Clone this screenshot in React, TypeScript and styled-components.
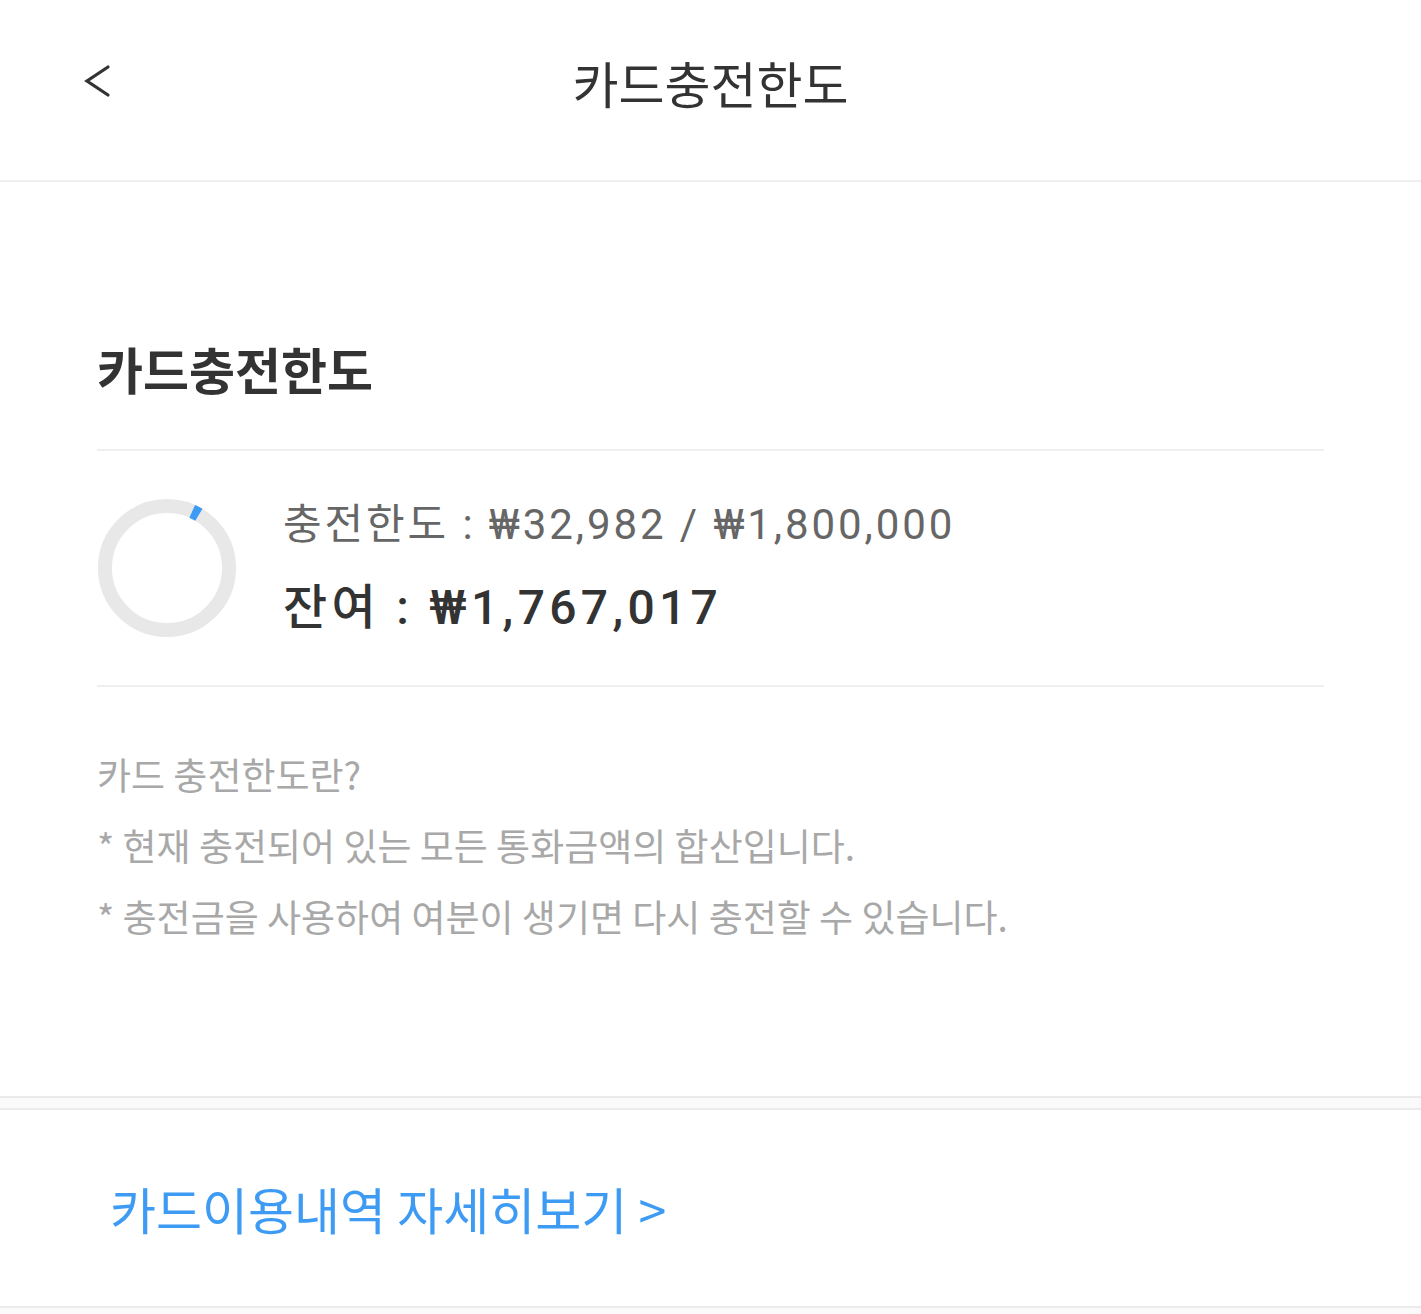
import * as React from 'react';
import styled, { createGlobalStyle } from 'styled-components';

const dark = '#333333';
const mid = '#666666';
const light = '#a8a8a8';
const line = '#efefef';
const blue = '#3d9bf3';

const GlobalStyle = createGlobalStyle`
  html, body {
    margin: 0;
    padding: 0;
    background: #ffffff;
  }
  body {
    font-family: "Noto Sans CJK KR", "Noto Sans", sans-serif;
    color: ${dark};
  }
`;

const Page = styled.div`
  width: 1421px;
  min-height: 1314px;
  background: #fafafa;
`;

const Header = styled.header`
  display: grid;
  grid-template-columns: 1fr auto 1fr;
  align-items: center;
  box-sizing: border-box;
  height: 182px;
  padding-bottom: 16px;
  background: #ffffff;
  border-bottom: 2px solid ${line};
`;

const BackButton = styled.button`
  justify-self: start;
  display: flex;
  align-items: center;
  margin: 0 0 0 78px;
  padding: 4px;
  border: none;
  background: none;
  color: ${dark};
  cursor: pointer;
`;

const HeaderTitle = styled.h1`
  margin: 0;
  font-size: 50px;
  font-weight: 400;
  line-height: 1;
  color: ${dark};
`;

const Content = styled.main`
  background: #ffffff;
  padding: 158px 97px 144px;
`;

const SectionTitle = styled.h2`
  margin: 0 0 53px;
  font-size: 50px;
  font-weight: 700;
  line-height: 56px;
  color: ${dark};
`;

const Summary = styled.section`
  display: flex;
  align-items: center;
  gap: 46px;
  height: 234px;
  border-top: 2px solid ${line};
  border-bottom: 2px solid ${line};
`;

const Amounts = styled.div`
  display: flex;
  flex-direction: column;
  gap: 29px;
`;

const AmountLine = styled.div<{ $strong?: boolean }>`
  font-family: Roboto, "Noto Sans CJK KR", sans-serif;
  font-size: ${p => (p.$strong ? '48px' : '42px')};
  font-weight: ${p => (p.$strong ? 500 : 400)};
  line-height: 1.2;
  letter-spacing: ${p => (p.$strong ? '4.3px' : '2.9px')};
  color: ${p => (p.$strong ? dark : mid)};
  white-space: nowrap;
`;

const Notes = styled.div`
  padding-top: 52px;
`;

const Note = styled.p`
  margin: 0;
  font-size: 37px;
  font-weight: 400;
  line-height: 71px;
  color: ${light};
  white-space: nowrap;
`;

const Band = styled.div`
  height: 10px;
  background: #fafafa;
  border-top: 2px solid #ebebeb;
  border-bottom: 2px solid #ebebeb;
`;

const LinkRow = styled.div`
  display: flex;
  align-items: center;
  height: 196px;
  padding-left: 110px;
  background: #ffffff;
  border-bottom: 2px solid #ebebeb;
`;

const DetailLink = styled.a`
  font-size: 50px;
  font-weight: 400;
  color: ${blue};
  text-decoration: none;
  white-space: nowrap;
`;

const Chevron = () => (
  <svg width='30' height='36' viewBox='0 0 30 36'>
    <polyline points='26,3 5,17 26,31' fill='none' stroke={dark} strokeWidth='3.2' strokeLinecap='round' strokeLinejoin='miter' />
  </svg>
);

interface IRingProps {
  used: number;
  limit: number;
}

const Ring: React.FC<IRingProps> = ({ used, limit }) => {
  const r = 62;
  const c = 2 * Math.PI * r;
  const arc = Math.max((used / limit) * c, 7.6);
  return (
    <svg width='140' height='140' viewBox='0 0 140 140'>
      <circle cx='70' cy='70' r={r} fill='none' stroke='#e8e8e8' strokeWidth='14' />
      <circle cx='70' cy='70' r={r} fill='none' stroke={blue} strokeWidth='14'
        strokeDasharray={`${arc} ${c}`} transform='rotate(-66 70 70)' />
    </svg>
  );
};

const App: React.FC = () => (
  <Page>
    <GlobalStyle />
    <Header>
      <BackButton aria-label='back'><Chevron /></BackButton>
      <HeaderTitle>카드충전한도</HeaderTitle>
      <div />
    </Header>
    <Content>
      <SectionTitle>카드충전한도</SectionTitle>
      <Summary>
        <Ring used={32982} limit={1800000} />
        <Amounts>
          <AmountLine>충전한도 : ₩32,982 / ₩1,800,000</AmountLine>
          <AmountLine $strong>잔여 : ₩1,767,017</AmountLine>
        </Amounts>
      </Summary>
      <Notes>
        <Note>카드 충전한도란?</Note>
        <Note>* 현재 충전되어 있는 모든 통화금액의 합산입니다.</Note>
        <Note>* 충전금을 사용하여 여분이 생기면 다시 충전할 수 있습니다.</Note>
      </Notes>
    </Content>
    <Band />
    <LinkRow>
      <DetailLink href='#'>카드이용내역 자세히보기 &gt;</DetailLink>
    </LinkRow>
  </Page>
);

export default App;
